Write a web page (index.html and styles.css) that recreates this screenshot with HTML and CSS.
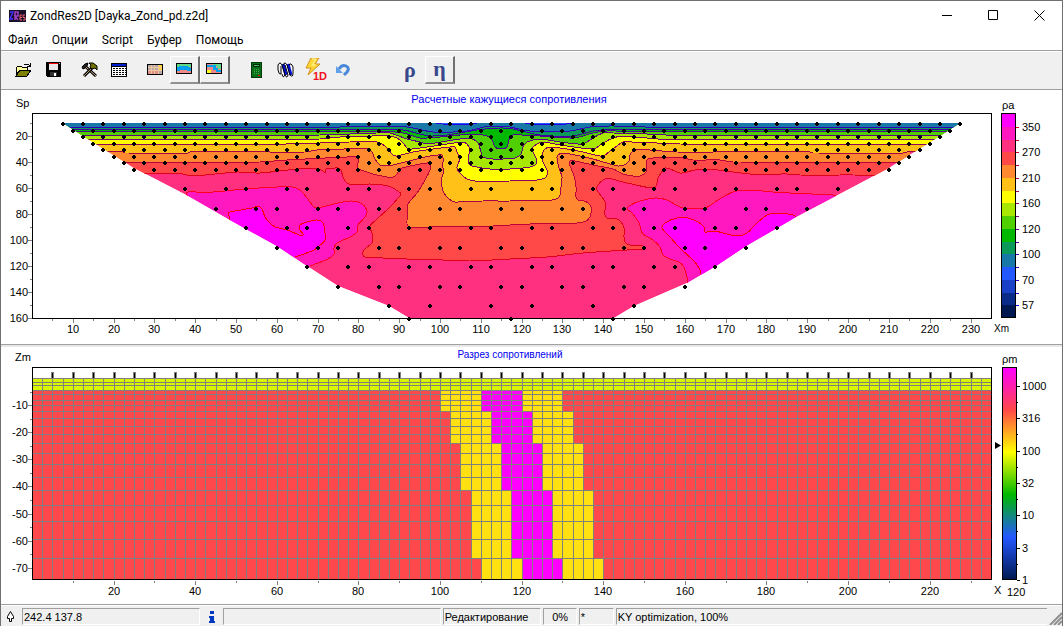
FILE: index.html
```html
<!DOCTYPE html>
<html lang="ru">
<head>
    <meta charset="utf-8">
    <title>ZondRes2D [Dayka_Zond_pd.z2d]</title>
    <link rel="stylesheet" href="styles.css">
</head>
<body>
<div class="window">
    <header class="titlebar">
        <svg class="app-icon" width="17" height="12" viewBox="0 0 17 12">
            <rect width="17" height="12" fill="#181028"/>
            <path d="M1 2h3L1 9h3" fill="none" stroke="#4030ff" stroke-width="1.5"/>
            <path d="M6 10V2h3v4H6l3 4" fill="none" stroke="#a040c0" stroke-width="1.5"/>
            <path d="M13 5h-2v5h2M11 7.500h2M16 5h-2v2.500h2V10h-2" fill="none" stroke="#f06070"/>
        </svg>
        <span class="title">ZondRes2D [Dayka_Zond_pd.z2d]</span>
        <div class="window-buttons">
            <button type="button" aria-label="Minimize"><svg width="11" height="11"><path d="M0 5.500h10" stroke="#000"/></svg></button>
            <button type="button" aria-label="Maximize"><svg width="11" height="11"><path d="M.5.5h9v9h-9z" fill="none" stroke="#000"/></svg></button>
            <button type="button" aria-label="Close"><svg width="11" height="11"><path d="M.5.5l10 10M10.500.5l-10 10" stroke="#000"/></svg></button>
        </div>
    </header>

    <nav class="menu">
        <button type="button">Файл</button>
        <button type="button">Опции</button>
        <button type="button">Script</button>
        <button type="button">Буфер</button>
        <button type="button">Помощь</button>
    </nav>

    <div class="toolbar">
        <div class="group">
            <button type="button" aria-label="Open">
                <svg width="17" height="14" shape-rendering="crispEdges">
                    <path d="M1 12V4h1l1-1h3l1 1h5v3H5z" fill="#ffffa0" stroke="#000"/>
                    <path d="M1 13l4-6h11l-4 6z" fill="#808000" stroke="#000"/>
                    <path d="M9 2l1-1h3l2 2M15 0v4M12 3h4" fill="none" stroke="#000"/>
                </svg>
            </button>
            <button type="button" aria-label="Save">
                <svg width="15" height="15" shape-rendering="crispEdges">
                    <path d="M0 0h15v15H1l-1-1z"/>
                    <path d="M3 1h9v7H3z" fill="#e8e8e8"/>
                    <path d="M3 1h9v1H3z" fill="#f00"/>
                    <path d="M4 10h7v4H4z" fill="#303030"/>
                    <path d="M8 11h2v3H8z" fill="#fff"/>
                    <path d="M13 1h1v1h-1z" fill="#ccc"/>
                </svg>
            </button>
        </div>
        <div class="group">
            <button type="button" aria-label="Tools">
                <svg width="17" height="15">
                    <path d="M4 4l11 10" stroke="#000" stroke-width="3"/>
                    <path d="M5 5l10 9" stroke="#d0b090"/>
                    <path d="M12 5l-9 9" stroke="#000" stroke-width="3"/>
                    <path d="M12 5l-9 9" stroke="#c0a060"/>
                    <path d="M1 5l3-3 3-1-1 3-2 2-2 1z" fill="#222" stroke="#000"/>
                    <path d="M8 1h4l4 3v4l-2-2-3 1-2-2 1-2z" fill="#707000" stroke="#000"/>
                </svg>
            </button>
            <button type="button" aria-label="Table">
                <svg width="17" height="14" shape-rendering="crispEdges">
                    <path d="M0 0h16v14H0z"/>
                    <path d="M1 4h14v9H1z" fill="#fff"/>
                    <path d="M1 1h14v2H1z" fill="#0020d0"/>
                    <path d="M2 5.500h13M2 7.500h13M2 9.500h13M2 11.500h13" stroke="#000" stroke-dasharray="2 1"/>
                </svg>
            </button>
        </div>
        <div class="group">
            <button type="button" aria-label="Observed section">
                <svg width="17" height="12" shape-rendering="crispEdges">
                    <path d="M.5.5h15v10H.5z" fill="#b8a8a8" stroke="#000"/>
                    <path d="M12 1h3v5h-3z" fill="#ffd040"/>
                    <path d="M1 6h10v4H1z" fill="#e09088"/>
                    <path d="M1 3.500h14M1 6.500h14M4.500 1v9M7.500 1v9M11.500 1v9" stroke="#f0c8a0"/>
                </svg>
            </button>
            <button type="button" class="pressed" aria-label="Calculated section">
                <svg width="17" height="12" shape-rendering="crispEdges">
                    <path d="M.5.5h15v10H.5z" fill="#f08888" stroke="#000"/>
                    <path d="M1 1h14v3H1z" fill="#60d888"/>
                    <path d="M1 4l3-1h7l4 2v3h-4l-1-1H5L3 8H1z" fill="#00a0f0"/>
                </svg>
            </button>
            <button type="button" class="pressed" aria-label="Model section">
                <svg width="17" height="12" shape-rendering="crispEdges">
                    <path d="M.5.5h15v10H.5z" fill="#f08888" stroke="#000"/>
                    <path d="M7 1h8v5h-4V3H7z" fill="#60d888"/>
                    <path d="M1 2h9v3h2v2h3v2h-5V7H7V4H1z" fill="#00a0f0"/>
                    <path d="M1 7h4v3H1z" fill="#ffff20"/>
                </svg>
            </button>
        </div>
        <div class="group compute">
            <button type="button" aria-label="Calculator">
                <svg width="12" height="16" shape-rendering="crispEdges">
                    <path d="M.5.500h10v15H.5z" fill="#087018" stroke="#003808"/>
                    <path d="M2 2h7v3H2z" fill="#002808"/>
                    <path d="M3 3h5v1H3z" fill="#40c050"/>
                    <path d="M3 7.500h6M3 9.500h6M3 11.500h6" stroke="#40b050" stroke-dasharray="1 1"/>
                    <path d="M7 13h2v1H7z" fill="#f00"/>
                </svg>
            </button>
            <button type="button" aria-label="Inversion">
                <svg width="17" height="16">
                    <path d="M4 2l3 10M9 2l3 11M14 4l1 9" stroke="#fff" stroke-width="3"/>
                    <path d="M6 2l3 11M11 2l3 11" stroke="#0010d0" stroke-width="3"/>
                    <path d="M1 8V3q2-4 4 0l3 10q2 4 3 0L8 3M1 8q1 5 3 4V4M6 3q2-4 4 0l3 10q3 3 3-2V5q-2-5-4-2M8 13q-2 4-3-1" fill="none" stroke="#000"/>
                </svg>
            </button>
            <button type="button" class="one-d" aria-label="1D inversion">
                <svg width="16" height="18">
                    <path d="M6 0h8l-4 6h5L3 17l3-7H1z" fill="#ffd838" stroke="#d09018"/>
                    <path d="M7 1h4L7 7h4" fill="none" stroke="#fff6a0"/>
                </svg>
                <span>1D</span>
            </button>
            <button type="button" aria-label="Undo">
                <svg width="15" height="14">
                    <path d="M3 6q3-5 7-3t1 6l-3 3" fill="none" stroke="#4888d8" stroke-width="3"/>
                    <path d="M0 3v7h7z" fill="#60a0e8"/>
                </svg>
            </button>
        </div>
        <div class="group greek">
            <button type="button">ρ</button>
            <button type="button" class="pressed">η</button>
        </div>
    </div>

    <main>
        <section class="panel">
            <svg id="pseudo" class="plot" viewBox="1 90 1061 254"></svg>
        </section>
        <section class="panel">
            <svg id="model" class="plot" viewBox="1 347 1061 257"></svg>
        </section>
    </main>

    <footer class="status">
        <span class="cell-icon"><svg width="8" height="12"><path d="M3.500.5l3 5v2h-2v3h-2v-3h-2v-2z" fill="#fff" stroke="#000"/></svg></span>
        <span class="cell coords">242.4 137.8</span>
        <span class="cell-icon"><svg width="6" height="12" fill="#0038c0"><path d="M1 0h4v3H1zM0 5h5v5h1v2H0v-2h1V7H0z"/></svg></span>
        <span class="cell message"></span>
        <span class="cell mode">Редактирование</span>
        <span class="cell percent">0%</span>
        <span class="cell flag">*</span>
        <span class="cell info">KY optimization, 100%</span>
        <svg class="grip" width="13" height="13"><path d="M1 13L13 1M5 13l8-8M9 13l4-4" stroke="#909090" stroke-width="2"/></svg>
    </footer>
</div>
<script src="script.js"></script>
</body>
</html>
```
FILE: styles.css
```css
* {
    box-sizing: border-box;
}

body {
    margin: 0;
    background: #f0f0f0;
    color: #000;
    font-family: "Liberation Sans", Arial, sans-serif;
    font-size: 11px;
}

button {
    font: inherit;
    color: inherit;
    border: 0;
    padding: 0;
    background: none;
}

.window {
    display: flex;
    flex-direction: column;
    min-height: 100vh;
    border: 1px solid #707070;
    border-bottom: 0;
}

.titlebar {
    display: flex;
    align-items: center;
    height: 29px;
    padding-left: 8px;
    background: #fff;
    font-family: Roboto, "Open Sans", sans-serif;
    font-size: 12px;
}

.title {
    margin-left: 4px;
}

.window-buttons {
    display: flex;
    margin-left: auto;
}

.window-buttons button {
    display: flex;
    align-items: center;
    justify-content: center;
    width: 46px;
    height: 29px;
}

.menu {
    display: flex;
    align-items: center;
    gap: 14px;
    height: 21px;
    padding-left: 7px;
    background: #fff;
    border-bottom: 1px solid #a0a0a0;
    font-family: Roboto, "Open Sans", sans-serif;
    font-size: 12px;
}

.toolbar {
    display: flex;
    align-items: center;
    height: 39px;
    padding: 0 0 2px 7px;
    border-top: 1px solid #fff;
    border-bottom: 1px solid #a0a0a0;
}

.group {
    display: flex;
    margin-right: 6px;
}

.group button {
    display: flex;
    align-items: center;
    justify-content: center;
    width: 30px;
    height: 28px;
}

.group .pressed {
    border: 1px solid #fff;
    border-right: 2px solid #707070;
    border-bottom: 2px solid #909090;
}

.compute {
    margin-left: 6px;
    margin-right: 37px;
}

.compute button {
    width: 29px;
}

.group .one-d {
    position: relative;
    align-items: flex-start;
    padding: 2px 4px 0 0;
}

.one-d span {
    position: absolute;
    right: 2px;
    bottom: 2px;
    color: #f01020;
    font-weight: bold;
    font-size: 11px;
    line-height: 11px;
}

.greek {
    font-family: "Liberation Serif", serif;
    font-size: 22px;
    font-weight: bold;
    line-height: 20px;
    color: #38488c;
}

main {
    flex: 1;
    background: #fff;
}

.panel {
    background: #fff;
    border-bottom: 1px solid #a0a0a0;
}

.panel + .panel {
    border-top: 2px solid #e8e8e8;
}

.plot {
    display: block;
    width: 100%;
    height: auto;
}

.plot text {
    font-size: 11px;
}

.plot .small {
    font-size: 10px;
}

.plot .plot-title {
    fill: #0000f0;
    text-anchor: middle;
}

.plot .x-label {
    text-anchor: middle;
}

.plot .y-label {
    text-anchor: end;
}

.frame {
    fill: none;
    stroke: #000;
}

.tick {
    stroke: #808080;
}

.mesh {
    stroke: #808080;
    shape-rendering: crispEdges;
}

.contour {
    stroke-width: 1;
    stroke-linejoin: round;
    shape-rendering: crispEdges;
}

.status {
    display: flex;
    align-items: center;
    height: 20px;
    padding: 2px 0 1px;
    gap: 2px;
}

.cell {
    height: 17px;
    padding-left: 1px;
    border: 1px solid #a0a0a0;
    border-right-color: #fff;
    border-bottom-color: #fff;
    line-height: 16px;
    white-space: nowrap;
}

.cell-icon {
    display: flex;
    justify-content: center;
    width: 19px;
}

.coords {
    width: 178px;
}

.message {
    flex: 1;
}

.mode {
    width: 98px;
}

.percent {
    width: 34px;
    text-align: center;
}

.flag {
    width: 35px;
}

.info {
    flex: 2;
    border-right: 0;
}

.grip {
    align-self: flex-end;
}
```
FILE: script.js
```js
const NS = 'http://www.w3.org/2000/svg';

function add(parent, tag, attrs, text) {
    const node = document.createElementNS(NS, tag);
    for (const key in attrs) node.setAttribute(key, attrs[key]);
    if (text !== undefined) node.textContent = text;
    parent.appendChild(node);
    return node;
}

const LEFT = 32, RIGHT = 991;
const xPos = x => Math.floor(32.4 + x * 4.081);
const spPos = s => Math.round(110 + s * 1.302);
const zPos = z => Math.round(378 + z * 2.71);

// low to high resistivity
const palette = ['#001850', '#0a2c88', '#1a40c8', '#2458ff', '#1878a8', '#0c9a58', '#00b800', '#50d000',
    '#a8e800', '#ffff00', '#ffc018', '#ff8830', '#ff4848', '#ff3080', '#ff18c0', '#ff00ff'];

// smooth curve through "x,y x,y ..." points
function curve(str) {
    const p = str.trim().split(/\s+/).map(s => s.split(',').map(Number));
    let d = 'M' + p[0];
    for (let i = 0; i < p.length - 1; i++) {
        const a = p[i - 1] || p[i], b = p[i], c = p[i + 1], e = p[i + 2] || c;
        // long flat runs next to short segments must not overshoot
        const len = Math.hypot(c[0] - b[0], c[1] - b[1]);
        const k1 = Math.min(1 / 7, len / 3 / (Math.hypot(c[0] - a[0], c[1] - a[1]) || 1));
        const k2 = Math.min(1 / 7, len / 3 / (Math.hypot(e[0] - b[0], e[1] - b[1]) || 1));
        d += 'C' + [b[0] + (c[0] - a[0]) * k1, b[1] + (c[1] - a[1]) * k1,
            c[0] - (e[0] - b[0]) * k2, c[1] - (e[1] - b[1]) * k2, c[0], c[1]].join(' ');
    }
    return d;
}

// each isoline is the lower edge of everything filled with its colour
const isolines = [
    { fill: '#ff4848', line: '#e00018', pts: `140,174 183,174 187,175 205,175 237,172 260,173 297,169 310,169 318,169 323,171 325,173 326,169 338,168
        341,170 343,177 347,183 353,185 370,184 388,186 398,191 401,194 399,197 390,207 377,219 370,226 372,233 373,238 372,243 366,248 363,252
        363,255 365,257 407,259 443,260 470,261 510,259 547,257 583,253 627,250 644,249 645,247 643,246 630,245 625,242 624,237 624,228 621,222
        617,219 607,218 605,215 605,202 602,197 597,190 598,185 603,180 608,178 623,182 654,188 658,178 663,170 665,168 670,169 680,173 687,172
        695,170 718,170 750,174 787,174 800,175 840,175 843,174 853,175 890,175` },
    { fill: '#ff8830', line: '#c00038', pts: `115,162 240,162 260,162 287,160 325,158 347,157 356,157 358,159 358,163 357,166 359,169 373,174 387,177
        393,177 397,174 399,170 402,168 420,164 428,163 430,165 430,170 425,180 417,193 408,204 408,213 409,227 447,226 467,227 493,226 510,225
        530,224 577,223 586,221 590,217 591,213 591,207 588,203 584,201 578,200 576,197 576,187 574,176 569,162 575,161 593,165 613,169 623,174
        633,176 640,176 646,172 647,168 647,160 653,158 683,158 693,160 720,160 733,162 827,162 910,162` },
    { fill: '#ffc018', line: '#a80048', pts: `95,152 123,152 125,153 188,153 190,152 270,152 305,152 317,150 368,149 372,152 375,159 380,165 385,166
        393,165 413,160 430,156 442,155 443,158 443,168 444,172 442,177 442,187 444,193 449,199 455,202 483,201 510,201 552,200 558,198 560,195
        561,187 562,177 559,168 557,158 558,155 563,153 580,156 593,159 610,164 618,166 624,165 629,161 630,155 634,150 640,149 650,150 677,152
        713,152 810,152 813,153 903,153 907,152 930,152` },
    { fill: '#ffff00', line: '#900058', pts: `85,144.500 260,144.500 320,143 350,142 377,142 386,147 393,155 397,156 413,152 433,149 450,147 455,147 457,152
        460,158 458,164 457,168 460,173 467,179 475,181 510,181 537,180 545,178 547,175 547,170 543,162 542,155 545,149 550,147 573,150 587,153
        600,156 605,155 610,151 617,146 623,142 657,143 680,144 727,144.500 940,144.500` },
    { fill: '#a8e800', line: '#780068', pts: `75,139.500 260,139.500 320,139 340,137 388,136 397,138 403,143 409,149 427,147 447,144 462,142 467,144 470,150
        468,158 470,165 477,167 490,169 510,169 530,167 536,164 536,158 532,150 534,146 543,142 560,145 593,149 603,143 613,138 623,136 647,138
        667,139.500 950,139.500` },
    { fill: '#50d000', line: '#600080', pts: `65,135.500 260,135.500 320,135 377,133 390,133 407,139 420,142 427,144 447,141 460,139 472,139 478,143 481,152
        483,157 493,159 503,159 515,158 521,154 523,147 527,142 540,139 560,142 582,144 593,138 603,133 613,133 647,134 680,135.500 960,135.500` },
    { fill: '#00b800', line: '#500090', pts: `60,131.500 260,131.500 377,131 403,133 420,138 440,137 473,134 490,137 493,142 495,147 500,149 507,147 509,140
        513,135 540,136 573,138 593,133 607,131 647,131.500 960,131.500` },
    { fill: '#0c9a58', line: '#4000a0', pts: `60,129.500 377,129.500 403,130 420,134 430,136 447,135 477,130 500,128 513,129 540,135 573,136 593,131
        613,129.500 960,129.500` },
    { fill: '#1878a8', line: '#3000b8', pts: `60,127.500 320,127.500 360,126.500 407,127 433,132 467,131 484,127 500,126 510,127 530,131 570,131 590,127
        613,126 667,127.500 960,127.500` }
];

const patches = [
    { fill: '#ff18c0', line: '#ff0020', pts: `189,198 186,194 188,192 213,192 245,189 277,187 292,187 300,190 307,198 313,206 317,208 338,203 352,201
        362,204 367,211 365,217 358,225 357,232 350,237 337,243 334,248 334,254 328,259 310,266`, close: 'L300,300L180,240Z' },
    { fill: '#ff00ff', line: '#ff0000', pts: `230,220 229,216 228,214 230,212 252,208 258,206 262,209 265,217 270,223 275,227 287,230 302,236 303,234
        300,230 300,225 307,222 317,220 323,223 325,233 325,240 318,247 312,251 295,257`, close: 'L290,290L220,240Z' },
    { fill: '#ff18c0', line: '#ff0020', pts: `687,283 687,277 684,267 679,262 670,259 663,255 660,247 653,240 643,234 641,230 639,223 632,213 627,208
        637,202 655,198 667,200 683,208 705,208 718,200 733,192 750,190 773,192 790,193 833,195 836,196`, close: 'L850,260L700,320Z' },
    { fill: '#ff00ff', line: '#ff0000', pts: `701,274 700,270 695,262 680,248 670,237 662,228 665,223 677,218 688,218 698,222 704,227 705,232 715,231
        723,233 737,236 747,233 757,223 767,215 777,213 793,215 796,217`, close: 'L800,270L710,310Z' },
    { fill: '#2458ff', line: '#2000e0', pts: '430,122 447,124.500 470,124.500 480,122', close: 'Z' },
    { fill: '#2458ff', line: '#2000e0', pts: '521,122 533,124.500 562,124.500 575,122', close: 'Z' }
];

function drawPatch(g, p) {
    const d = curve(p.pts);
    add(g, 'path', { d: d + p.close, fill: p.fill });
    add(g, 'path', { d, fill: 'none', stroke: p.line, class: 'contour' });
}

function drawAxisX(svg, bottom, minor, major, last) {
    for (let x = minor; x <= last; x += minor) {
        const isMajor = x % major === 0;
        add(svg, 'path', { d: `M${xPos(x) + .5} ${bottom}v${isMajor ? 4 : 2}`, class: 'tick' });
        if (isMajor) add(svg, 'text', { x: xPos(x), y: bottom + 14, class: 'x-label' }, x);
    }
}

function drawPseudo() {
    const svg = document.getElementById('pseudo');
    const outline = '63,123 83,136 134,168 190,197 230,220 277,246 307,266 338,286 389,306 409,318 ' +
        '614,318 634,306 687,283 716,266 746,246 796,217 836,196 889,168 940,136 960,123';
    const clip = add(add(svg, 'defs', {}), 'clipPath', { id: 'section' });
    add(clip, 'polygon', { points: outline });

    const g = add(svg, 'g', { 'clip-path': 'url(#section)' });
    add(g, 'polygon', { points: outline, fill: '#ff3080' });
    patches.slice(0, 4).forEach(p => drawPatch(g, p));
    isolines.forEach(p => drawPatch(g, { ...p, close: 'V100H50Z' }));
    patches.slice(4).forEach(p => drawPatch(g, p));

    // measuring points
    const point = (x, s) => add(svg, 'path', {
        d: `M${xPos(x) - 1} ${spPos(s) - 2}h2v1h1v2h-1v1h-2v-1h-1v-2h1z`, transform: 'translate(0 1)'
    });
    [10, 15, 20, 25, 30, 35, 40, 45].forEach((s, row) => {
        for (let x = 7.5 + row * 2.5; x <= 227.5 - row * 2.5; x += 5) point(x, s);
    });
    [60, 75, 90, 105, 120, 135].forEach((s, row) => {
        const first = 37.5 + row * 7.5;
        for (let i = 0; first + i * 5 <= 197.5 - row * 7.5; i++) {
            if (i % 3 !== 1) point(first + i * 5, s);
        }
    });
    [87.5, 97.5, 112.5, 122.5, 137.5, 147.5].forEach(x => point(x, 150));
    [92.5, 117.5, 142.5].forEach(x => point(x, 160));

    add(svg, 'rect', { x: LEFT + .5, y: 113.5, width: RIGHT - LEFT, height: 205, class: 'frame' });
    drawAxisX(svg, 319, 5, 10, 230);
    for (let s = 10; s <= 160; s += 10) {
        const major = s % 20 === 0;
        add(svg, 'path', { d: `M${LEFT} ${spPos(s) + .5}h${major ? -4 : -2}`, class: 'tick' });
        if (major) add(svg, 'text', { x: 28, y: spPos(s) + 4, class: 'y-label' }, s);
    }
    add(svg, 'text', { x: 509, y: 103, class: 'plot-title' }, 'Расчетные кажущиеся сопротивления');
    add(svg, 'text', { x: 16, y: 107 }, 'Sp');
    add(svg, 'text', { x: 994, y: 332, class: 'small' }, 'Xm');
    add(svg, 'text', { x: 1002, y: 109 }, 'ρa');

    // colour scale
    const step = 204 / 16;
    const labels = [350, 270, 210, 160, 120, 100, 70, 57];
    palette.slice().reverse().forEach((c, i) => {
        const y = Math.round(114 + i * step);
        add(svg, 'rect', { x: 1002, y, width: 13, height: 13, fill: c });
        if (i > 0) {
            const t = i / 16;
            add(svg, 'path', { d: `M1016 ${y + .5}h3`, stroke: `rgb(${Math.round(255 * (1 - t))},0,${Math.round(255 * t)})` });
        }
        if (i % 2 === 1) add(svg, 'text', { x: 1022, y: y + 4 }, labels[(i - 1) / 2]);
    });
    add(svg, 'rect', { x: 1001.5, y: 113.5, width: 14, height: 204, class: 'frame' });
}

function drawModel() {
    const svg = document.getElementById('model');
    const rows = [378, 382, 385, 390, 394, 400, 405, 411, 418, 426, 434, 443, 453, 464, 477, 490, 505, 521, 539, 558];
    const dyke = [[390, 411, 100], [411, 443, 102.5], [443, 490, 105], [490, 558, 107.5], [558, 579, 110]];
    const block = (x1, x2, y1, y2, fill) =>
        add(svg, 'rect', { x: x1, y: y1, width: x2 - x1, height: y2 - y1, fill });

    block(LEFT, RIGHT, 378, 390, '#d8f400');
    block(LEFT, RIGHT, 390, 579, '#ff484c');
    dyke.forEach(([top, bottom, x]) => {
        block(xPos(x), xPos(x + 30), top, bottom, '#ffe010');
        block(xPos(x + 10), xPos(x + 20), top, bottom, '#ff00ff');
    });

    rows.forEach(y => add(svg, 'path', { d: `M${LEFT} ${y + .5}H${RIGHT}`, class: 'mesh' }));
    for (let x = 2.5; x < 235; x += 2.5) {
        add(svg, 'path', { d: `M${xPos(x) + .5} 378V579`, class: 'mesh' });
    }
    // electrodes
    for (let x = 5; x < 235; x += 5) {
        block(xPos(x) - 1, xPos(x) + 2, 372, 378, '#808080');
        block(xPos(x), xPos(x) + 1, 373, 378, '#000');
    }

    add(svg, 'rect', { x: LEFT + .5, y: 367.5, width: RIGHT - LEFT, height: 212, class: 'frame' });
    drawAxisX(svg, 581, 10, 20, 230);
    for (let z = 5; z <= 70; z += 5) {
        const major = z % 10 === 0;
        add(svg, 'path', { d: `M${LEFT} ${zPos(z) + .5}h${major ? -4 : -2}`, class: 'tick' });
        if (major) add(svg, 'text', { x: 28, y: zPos(z) + 4, class: 'y-label' }, -z);
    }
    add(svg, 'text', { x: 510, y: 358, class: 'plot-title small' }, 'Разрез сопротивлений');
    add(svg, 'text', { x: 15, y: 361 }, 'Zm');
    add(svg, 'text', { x: 994, y: 594 }, 'X');
    add(svg, 'text', { x: 1007, y: 596 }, '120');
    add(svg, 'text', { x: 1002, y: 363 }, 'ρm');

    const grad = add(add(svg, 'defs', {}), 'linearGradient', { id: 'scale', x1: 0, y1: 0, x2: 0, y2: 1 });
    [[0, '#ff00ff'], [.2, '#ff4848'], [.4, '#ffff00'], [.6, '#00b800'], [.8, '#2458ff'], [1, '#001850']]
        .forEach(([offset, color]) => add(grad, 'stop', { offset, 'stop-color': color }));
    add(svg, 'rect', { x: 1002.5, y: 367.5, width: 14, height: 212, fill: 'url(#scale)', stroke: '#000' });
    [1000, 316, 100, 32, 10, 3, 1].forEach((v, i) => {
        const y = Math.round(386 + i * 32.3);
        add(svg, 'path', { d: `M1017 ${y + .5}h3`, stroke: '#000' });
        if (v !== 1) add(svg, 'path', { d: `M1017 ${y + 16.5}h1`, stroke: '#000' });
        add(svg, 'text', { x: 1022, y: y + 4 }, v);
    });
    add(svg, 'path', { d: 'M995 442v7l6-3.500z' });
}

drawPseudo();
drawModel();
```
